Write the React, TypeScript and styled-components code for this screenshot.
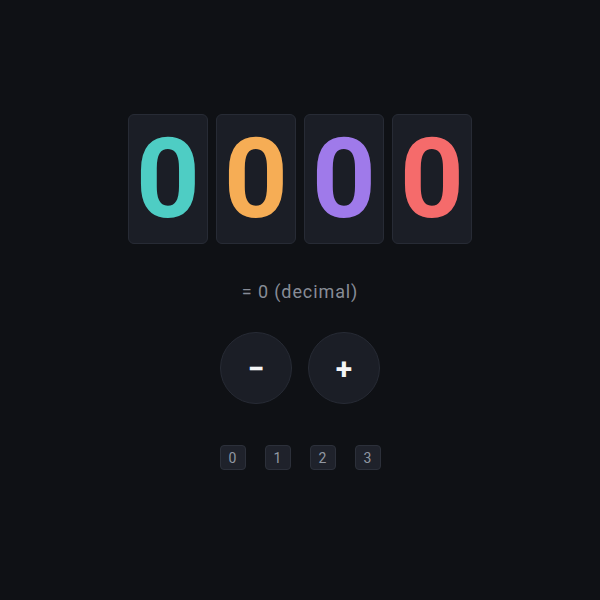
import React, { useState } from 'react';
import styled, { createGlobalStyle } from 'styled-components';

const GlobalStyle = createGlobalStyle`
  html, body {
    margin: 0;
    padding: 0;
    background: #0f1115;
  }
  body {
    font-family: Roboto, "Liberation Sans", sans-serif;
  }
`;

const COLORS = ['#4ecdc4', '#f6ad55', '#9f7aea', '#f56b6b'];

const Page = styled.div`
  width: 600px;
  height: 600px;
  display: flex;
  flex-direction: column;
  align-items: center;
  padding-top: 114px;
  box-sizing: border-box;
`;

const DigitRow = styled.div`
  display: flex;
  gap: 8px;
`;

const DigitCard = styled.div<{ color: string }>`
  width: 80px;
  height: 130px;
  box-sizing: border-box;
  background: #1b1e26;
  border: 1px solid #272b35;
  border-radius: 6px;
  display: flex;
  align-items: center;
  justify-content: center;
  color: ${({ color }) => color};
  font-size: 112px;
  font-weight: 700;
  line-height: 1;
`;

const Decimal = styled.div`
  margin-top: 37px;
  font-size: 18px;
  letter-spacing: 0.9px;
  color: #878c97;
  line-height: 22px;
`;

const ButtonRow = styled.div`
  display: flex;
  gap: 16px;
  margin-top: 29px;
`;

const RoundButton = styled.button`
  width: 72px;
  height: 72px;
  border-radius: 50%;
  background: #1b1e26;
  border: 1px solid #272b35;
  color: #f4f5f7;
  font-family: Roboto, "Liberation Sans", sans-serif;
  font-size: 30px;
  font-weight: 700;
  display: flex;
  align-items: center;
  justify-content: center;
  padding: 0;
  cursor: pointer;
`;

const ChipRow = styled.div`
  display: flex;
  gap: 19px;
  margin-top: 41px;
`;

const Chip = styled.button`
  width: 26px;
  height: 25px;
  box-sizing: border-box;
  border-radius: 4px;
  background: #1f222b;
  border: 1px solid #2c303a;
  color: #9198a3;
  font-family: Roboto, "Liberation Sans", sans-serif;
  font-size: 14px;
  padding: 0;
  display: flex;
  align-items: center;
  justify-content: center;
  cursor: pointer;
`;

export default function App() {
  const [digits, setDigits] = useState([0, 0, 0, 0]);
  const base = 4;
  const value = digits.reduce((acc, d) => acc * base + d, 0);

  const setValue = (v: number) => {
    const max = base ** 4;
    let n = ((v % max) + max) % max;
    const next: number[] = [];
    for (let i = 0; i < 4; i++) {
      next.unshift(n % base);
      n = Math.floor(n / base);
    }
    setDigits(next);
  };

  return (
    <>
      <GlobalStyle />
      <Page>
        <DigitRow>
          {digits.map((d, i) => (
            <DigitCard key={i} color={COLORS[i]}>
              {d}
            </DigitCard>
          ))}
        </DigitRow>
        <Decimal>= {value} (decimal)</Decimal>
        <ButtonRow>
          <RoundButton onClick={() => setValue(value - 1)}>−</RoundButton>
          <RoundButton onClick={() => setValue(value + 1)}>+</RoundButton>
        </ButtonRow>
        <ChipRow>
          {[0, 1, 2, 3].map((n) => (
            <Chip key={n}>{n}</Chip>
          ))}
        </ChipRow>
      </Page>
    </>
  );
}
